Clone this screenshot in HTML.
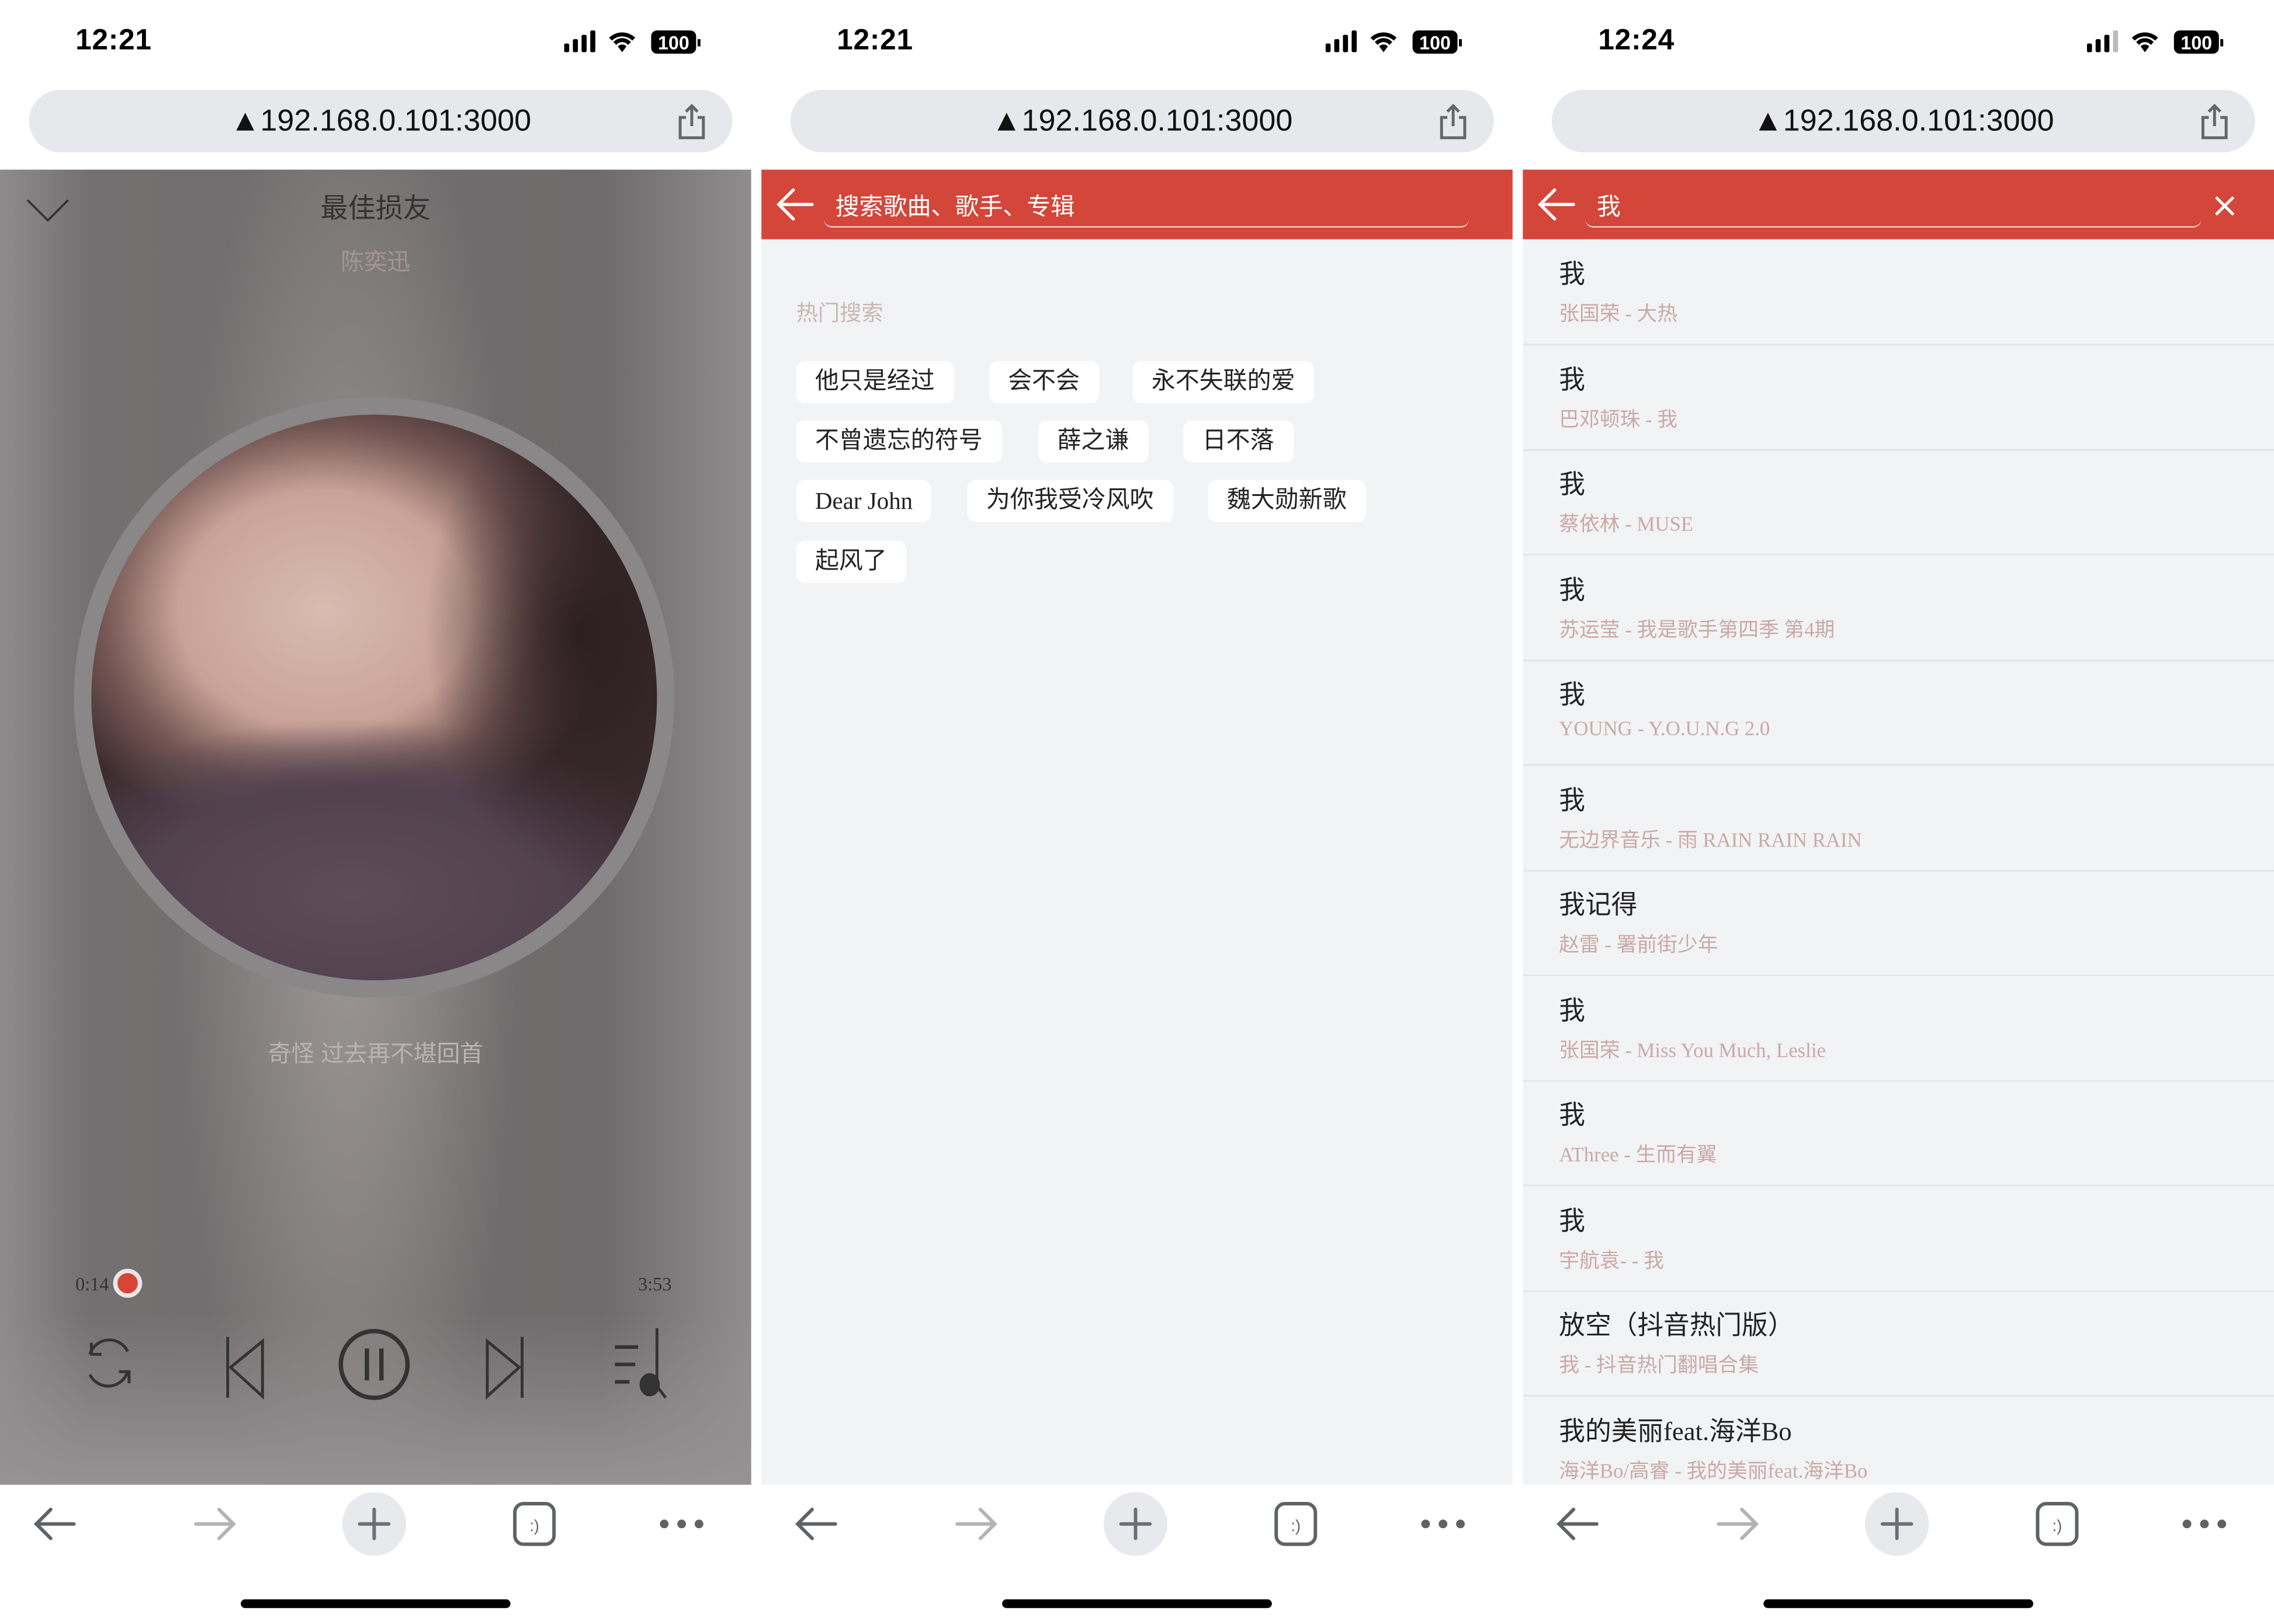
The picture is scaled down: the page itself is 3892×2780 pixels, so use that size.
<!DOCTYPE html>
<html><head><meta charset="utf-8"><style>
*{margin:0;padding:0;box-sizing:border-box}
html,body{width:3892px;height:2778px;overflow:hidden;background:#fff}
#w{position:absolute;left:0;top:0;width:1568px;height:1120px;transform:scale(2.48214);transform-origin:0 0;font-family:"Liberation Sans","Noto Sans CJK SC",sans-serif}
.ph{position:absolute;top:0;width:518px;height:1120px;background:#fff;overflow:hidden}
.time{position:absolute;left:52px;top:17px;font-size:20px;font-weight:bold;letter-spacing:0.3px}
.st{position:absolute;right:34px;top:19px}
.url{position:absolute;left:20px;top:62px;width:485px;height:43px;border-radius:22px;background:#e6e8eb;text-align:center;font-size:21px;line-height:43px;color:#111}
.share{position:absolute;right:18px;top:9px}
.content{position:absolute;left:0;top:117px;width:518px;height:907px}
.bb{position:absolute;left:0;top:1024px;width:518px;height:96px;background:#fff}
.home{position:absolute;left:166px;top:1103px;width:186px;height:6px;border-radius:3px;background:#000}
.tag{position:absolute;height:29px;background:#fff;border-radius:6px;font-size:16.5px;line-height:29px;padding:0 13px;color:#222}
.it{position:absolute;left:0;width:518px;height:73px;border-bottom:1px solid #e3e3e5}
.it .t{position:absolute;left:25px;top:10px;font-size:18px;color:#222;font-family:"Liberation Serif","Noto Sans CJK SC",serif}
.it .s{position:absolute;left:25px;top:41px;font-size:14px;color:#c9a9a6;font-family:"Liberation Serif","Noto Sans CJK SC",serif}
.blob{position:absolute}
</style></head><body><div id="w">

<div class="ph" style="left:0">
 <div class="time">12:21</div>
 <svg class="st" width="95" height="20" viewBox="0 0 95 20"><rect x="0" y="11" width="3.5" height="6" rx="1"/><rect x="6" y="8" width="3.5" height="9" rx="1"/><rect x="12" y="5" width="3.5" height="12" rx="1"/><rect x="18" y="2" width="3.5" height="15" rx="1"/><path d="M31 7a13 13 0 0 1 18 0l-2 2a10 10 0 0 0-14 0z M34 10a8 8 0 0 1 12 0l-2 2a5 5 0 0 0-8 0z M37 13a4 4 0 0 1 6 0l-3 4z"/><rect x="60" y="2" width="31" height="16" rx="4"/><text x="75.5" y="15" font-size="13" font-weight="bold" fill="#fff" text-anchor="middle" font-family="Liberation Sans">100</text><rect x="92" y="8" width="2" height="5"/></svg>
 <div class="url">▲192.168.0.101:3000<svg class="share" width="20" height="26" viewBox="0 0 20 26" fill="none" stroke="#666" stroke-width="2"><path d="M6 10H2v14h16V10h-4M10 16V2M6 6l4-4 4 4"/></svg></div>
 <div class="content" style="background:radial-gradient(closest-side,#a19c99,rgba(160,155,152,0)) 120px -100px/240px 1100px no-repeat,linear-gradient(90deg,#8d8b8c,#747071 12%,#6f6b6c 80%,#8f8d8e 100%);">
  <div style="position:absolute;left:0;bottom:0;width:518px;height:120px;background:linear-gradient(rgba(150,148,150,0),#949293)"></div>
  <svg style="position:absolute;left:18px;top:20px" width="30" height="16" viewBox="0 0 30 16" fill="none" stroke="#333" stroke-width="1.5"><path d="M1 1l14 14L29 1"/></svg>
  <div style="position:absolute;left:0;width:518px;top:12px;text-align:center;font-size:19px;color:#333">最佳损友</div>
  <div style="position:absolute;left:0;width:518px;top:50px;text-align:center;font-size:16px;color:#a39594">陈奕迅</div>
  <div style="position:absolute;left:51px;top:157px;width:414px;height:414px;border-radius:50%;background:#8a8788"></div>
  <div style="position:absolute;left:63px;top:169px;width:390px;height:390px;border-radius:50%;overflow:hidden;background:#3c2c2f">
   <div class="blob" style="left:-40px;top:-30px;width:400px;height:330px;background:radial-gradient(closest-side,#d9bbb0,#c8a297 50%,rgba(160,120,112,0.6) 75%,rgba(60,44,47,0))"></div>
   <div class="blob" style="left:-60px;top:210px;width:480px;height:240px;background:radial-gradient(closest-side,#5e4c5a,#52414f 60%,rgba(60,45,55,0))"></div>
   <div class="blob" style="left:230px;top:-20px;width:220px;height:340px;background:radial-gradient(closest-side,#2c1f21,rgba(46,32,34,0))"></div>
  </div>
  <div style="position:absolute;left:0;width:518px;top:596px;text-align:center;font-size:16px;color:#bbb3b3">奇怪 过去再不堪回首</div>
  <div style="position:absolute;left:52px;top:761px;font-size:13px;color:#333;font-family:'Liberation Serif',serif">0:14</div>
  <div style="position:absolute;left:78px;top:758px;width:20px;height:20px;border-radius:50%;background:#d84436;border:3px solid #e8e8e8"></div>
  <div style="position:absolute;left:440px;top:761px;font-size:13px;color:#333;font-family:'Liberation Serif',serif">3:53</div>
  <svg style="position:absolute;left:0;top:795px" width="518" height="60" viewBox="0 0 518 60" fill="none" stroke="#333" stroke-width="2"><path d="M62 22a14 14 0 0 1 26-2M63 14v8h7M88 34a14 14 0 0 1-26 2M89 42v-8h-7"/><path d="M157 10v42M181 13l-22 18 22 20z"/><circle cx="258" cy="29" r="23" stroke-width="3"/><path d="M253 18v22M263 18v22" stroke-width="3"/><path d="M336 13l22 18-22 20zM360 10v42"/><path d="M424 17h16M424 29h14M424 41h10" stroke-width="2.5"/><path d="M453 4v40l6 8"/><ellipse cx="448" cy="43" rx="6" ry="7" fill="#333"/></svg>
 </div>
 <div class="bb"></div>
</div>

<div class="ph" style="left:525px">
 <div class="time">12:21</div>
 <svg class="st" width="95" height="20" viewBox="0 0 95 20"><rect x="0" y="11" width="3.5" height="6" rx="1"/><rect x="6" y="8" width="3.5" height="9" rx="1"/><rect x="12" y="5" width="3.5" height="12" rx="1"/><rect x="18" y="2" width="3.5" height="15" rx="1"/><path d="M31 7a13 13 0 0 1 18 0l-2 2a10 10 0 0 0-14 0z M34 10a8 8 0 0 1 12 0l-2 2a5 5 0 0 0-8 0z M37 13a4 4 0 0 1 6 0l-3 4z"/><rect x="60" y="2" width="31" height="16" rx="4"/><text x="75.5" y="15" font-size="13" font-weight="bold" fill="#fff" text-anchor="middle" font-family="Liberation Sans">100</text><rect x="92" y="8" width="2" height="5"/></svg>
 <div class="url">▲192.168.0.101:3000<svg class="share" width="20" height="26" viewBox="0 0 20 26" fill="none" stroke="#666" stroke-width="2"><path d="M6 10H2v14h16V10h-4M10 16V2M6 6l4-4 4 4"/></svg></div>
 <div class="content" style="background:#f2f3f5">
  <div style="position:absolute;left:0;top:0;width:518px;height:48px;background:#d4453a"></div>
  <svg style="position:absolute;left:9px;top:12px" width="28" height="24" viewBox="0 0 28 24" fill="none" stroke="#fff" stroke-width="2.2" stroke-linecap="round"><path d="M26 12H3M13 2L3 12l10 10"/></svg>
  <div style="position:absolute;left:43px;top:10px;width:445px;height:30px;border-bottom:1.5px solid #f3d4d0;border-radius:0 0 6px 6px"></div>
  <div style="position:absolute;left:51px;top:12px;font-size:16.5px;color:#fff">搜索歌曲、歌手、专辑</div>
  <div style="position:absolute;left:24px;top:88px;font-size:15px;color:#c9b6b4">热门搜索</div>
  <div class="tag" style="left:24px;top:132px">他只是经过</div>
  <div class="tag" style="left:157px;top:132px">会不会</div>
  <div class="tag" style="left:256px;top:132px">永不失联的爱</div>
  <div class="tag" style="left:24px;top:173px">不曾遗忘的符号</div>
  <div class="tag" style="left:191px;top:173px">薛之谦</div>
  <div class="tag" style="left:291px;top:173px">日不落</div>
  <div class="tag" style="left:24px;top:214px;font-family:'Liberation Serif',serif">Dear John</div>
  <div class="tag" style="left:142px;top:214px">为你我受冷风吹</div>
  <div class="tag" style="left:308px;top:214px">魏大勋新歌</div>
  <div class="tag" style="left:24px;top:256px">起风了</div>
 </div>
 <div class="bb"></div>
</div>

<div class="ph" style="left:1050px">
 <div class="time">12:24</div>
 <svg class="st" width="95" height="20" viewBox="0 0 95 20"><rect x="0" y="11" width="3.5" height="6" rx="1"/><rect x="6" y="8" width="3.5" height="9" rx="1"/><rect x="12" y="5" width="3.5" height="12" rx="1"/><rect x="18" y="2" width="3.5" height="15" rx="1" fill="#bbb"/><path d="M31 7a13 13 0 0 1 18 0l-2 2a10 10 0 0 0-14 0z M34 10a8 8 0 0 1 12 0l-2 2a5 5 0 0 0-8 0z M37 13a4 4 0 0 1 6 0l-3 4z"/><rect x="60" y="2" width="31" height="16" rx="4"/><text x="75.5" y="15" font-size="13" font-weight="bold" fill="#fff" text-anchor="middle" font-family="Liberation Sans">100</text><rect x="92" y="8" width="2" height="5"/></svg>
 <div class="url">▲192.168.0.101:3000<svg class="share" width="20" height="26" viewBox="0 0 20 26" fill="none" stroke="#666" stroke-width="2"><path d="M6 10H2v14h16V10h-4M10 16V2M6 6l4-4 4 4"/></svg></div>
 <div class="content" style="background:#f2f3f5">
  <div style="position:absolute;left:0;top:0;width:518px;height:48px;background:#d4453a"></div>
  <svg style="position:absolute;left:9px;top:12px" width="28" height="24" viewBox="0 0 28 24" fill="none" stroke="#fff" stroke-width="2.2" stroke-linecap="round"><path d="M26 12H3M13 2L3 12l10 10"/></svg>
  <div style="position:absolute;left:43px;top:10px;width:425px;height:30px;border-bottom:1.5px solid #f3d4d0;border-radius:0 0 6px 6px"></div>
  <div style="position:absolute;left:51px;top:12px;font-size:16.5px;color:#fff">我</div>
  <svg style="position:absolute;left:476px;top:17px" width="16" height="16" viewBox="0 0 16 16" stroke="#fff" stroke-width="2"><path d="M2 2l12 12M14 2L2 14"/></svg>
  <div class="it" style="top:48px"><div class="t">我</div><div class="s">张国荣 - 大热</div></div>
  <div class="it" style="top:121px"><div class="t">我</div><div class="s">巴邓顿珠 - 我</div></div>
  <div class="it" style="top:193px"><div class="t">我</div><div class="s">蔡依林 - MUSE</div></div>
  <div class="it" style="top:266px"><div class="t">我</div><div class="s">苏运莹 - 我是歌手第四季 第4期</div></div>
  <div class="it" style="top:338px"><div class="t">我</div><div class="s">YOUNG - Y.O.U.N.G 2.0</div></div>
  <div class="it" style="top:411px"><div class="t">我</div><div class="s">无边界音乐 - 雨 RAIN RAIN RAIN</div></div>
  <div class="it" style="top:483px"><div class="t">我记得</div><div class="s">赵雷 - 署前街少年</div></div>
  <div class="it" style="top:556px"><div class="t">我</div><div class="s">张国荣 - Miss You Much, Leslie</div></div>
  <div class="it" style="top:628px"><div class="t">我</div><div class="s">AThree - 生而有翼</div></div>
  <div class="it" style="top:701px"><div class="t">我</div><div class="s">宇航袁- - 我</div></div>
  <div class="it" style="top:773px"><div class="t">放空（抖音热门版）</div><div class="s">我 - 抖音热门翻唱合集</div></div>
  <div class="it" style="top:846px;border:none"><div class="t">我的美丽feat.海洋Bo</div><div class="s">海洋Bo/高睿 - 我的美丽feat.海洋Bo</div></div>
 </div>
 <div class="bb"></div>
</div>

<svg style="position:absolute;left:0;top:1024px" width="1568" height="70" viewBox="0 0 1568 70">
 <g id="bar" fill="none" stroke-width="2.4" stroke-linecap="round">
  <path d="M25 27h26M35 17l-10 10 10 10" stroke="#5f6366"/>
  <path d="M135 27h26M151 17l10 10-10 10" stroke="#b3b3b3"/>
  <circle cx="258" cy="27" r="22" fill="#e8e9ec" stroke="none"/>
  <path d="M258 17v20M248 27h20" stroke="#6a7075"/>
  <rect x="355" y="13" width="27" height="28" rx="6" stroke="#5f6366"/>
  <text x="368.5" y="32" font-size="11" fill="#5f6366" stroke="none" text-anchor="middle" font-family="Liberation Sans">:)</text>
  <circle cx="458" cy="27" r="3" fill="#5f6366" stroke="none"/><circle cx="470" cy="27" r="3" fill="#5f6366" stroke="none"/><circle cx="482" cy="27" r="3" fill="#5f6366" stroke="none"/>
 </g>
 <use href="#bar" x="525"/>
 <use href="#bar" x="1050"/>
</svg>
<div class="home"></div><div class="home" style="left:691px"></div><div class="home" style="left:1216px"></div>
</div></body></html>
